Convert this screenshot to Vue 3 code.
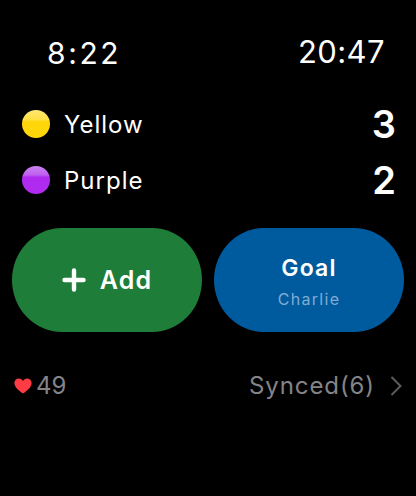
<template>
  <div class="watch">
    <div class="clock-row">
      <span class="clock-left">8:22</span>
      <span class="clock-right">20:47</span>
    </div>

    <div class="players">
      <div v-for="team in teams" :key="team.name" class="team-row">
        <span class="dot" :class="team.cls"></span>
        <span class="team-name">{{ team.name }}</span>
        <span class="team-score">{{ team.score }}</span>
      </div>
    </div>

    <div class="actions">
      <div class="action add">
        <svg class="plus" viewBox="0 0 24 24" width="24" height="24">
          <path d="M12 2.500v19M2.500 12h19" stroke="#fff" stroke-width="4.400" stroke-linecap="round" fill="none" />
        </svg>
        <span class="add-label">Add</span>
      </div>
      <div class="action goal">
        <span class="goal-label">Goal</span>
        <span class="goal-sub">Charlie</span>
      </div>
    </div>

    <div class="status">
      <div class="heart-rate">
        <svg class="heart" viewBox="0 0 18 16" width="18" height="16">
          <path d="M9 15.600C3.600 11.600.4 8.600.4 5 .4 2.400 2.400.4 4.900.4 6.600.4 8.100 1.300 9 2.900 9.900 1.300 11.400.4 13.100.4c2.500 0 4.500 2 4.500 4.600 0 3.600-3.200 6.600-8.600 10.600z" fill="#ff3b43" />
        </svg>
        <span>49</span>
      </div>
      <div class="synced">
        <span>Synced(6)</span>
        <svg class="chevron" viewBox="0 0 14 22" width="14" height="22">
          <path d="M2.500 2l9 9-9 9" stroke="#5c5c5e" stroke-width="2" fill="none" />
        </svg>
      </div>
    </div>
  </div>
</template>

<script setup>
const teams = [
  { name: 'Yellow', score: 3, cls: 'yellow' },
  { name: 'Purple', score: 2, cls: 'purple' }
];
</script>

<style>
html,
body {
  margin: 0;
  background: #000;
}
</style>

<style scoped>
.watch {
  width: 416px;
  height: 496px;
  box-sizing: border-box;
  padding: 34px 12px 0;
  background: #000;
  color: #fff;
  font-family: Inter, "Liberation Sans", sans-serif;
  overflow: hidden;
}

.clock-row {
  display: flex;
  justify-content: space-between;
  align-items: flex-start;
  padding: 0 19px 0 35px;
  height: 72px;
}

.clock-left {
  font-size: 30px;
  line-height: 38px;
  letter-spacing: 2.6px;
}

.clock-right {
  font-size: 31px;
  line-height: 36px;
  letter-spacing: 0.4px;
}

.players {
  display: flex;
  flex-direction: column;
  gap: 20px;
}

.team-row {
  display: flex;
  align-items: center;
  height: 36px;
  padding: 0 8px 0 10px;
}

.dot {
  width: 28px;
  height: 28px;
  border-radius: 50%;
  margin-right: 14px;
}

.dot.yellow {
  background: linear-gradient(#ffe873 0, #ffe044 34%, #ffd60a 42%, #ffd60a 100%);
}

.dot.purple {
  background: linear-gradient(#c984ef 0, #c05ff0 32%, #af2bf0 40%, #af2bf0 100%);
}

.team-name {
  flex: 1;
  font-size: 24px;
  letter-spacing: 1px;
}

.team-score {
  font-size: 38px;
  font-weight: 600;
}

.actions {
  display: flex;
  gap: 12px;
  margin-top: 30px;
}

.action {
  width: 190px;
  height: 104px;
  border-radius: 50px / 52px;
  display: flex;
  align-items: center;
  justify-content: center;
}

.add {
  background: #1e7d38;
  gap: 14px;
}

.add-label {
  font-size: 25px;
  font-weight: 600;
  letter-spacing: 1.200px;
}

.goal {
  background: #005a9e;
  flex-direction: column;
  padding-top: 4px;
  box-sizing: border-box;
}

.goal-label {
  font-size: 23px;
  font-weight: 600;
  letter-spacing: 1.200px;
  line-height: 30px;
}

.goal-sub {
  font-size: 16px;
  letter-spacing: 1.300px;
  line-height: 24px;
  color: #80acd3;
  margin-top: 4px;
}

.status {
  display: flex;
  justify-content: space-between;
  align-items: center;
  margin-top: 39px;
  padding: 0 1px 0 2px;
  font-size: 24px;
  color: #848488;
}

.heart-rate {
  display: flex;
  align-items: center;
  gap: 4px;
}

.synced {
  display: flex;
  align-items: center;
  gap: 14px;
  letter-spacing: 0.9px;
}
</style>
